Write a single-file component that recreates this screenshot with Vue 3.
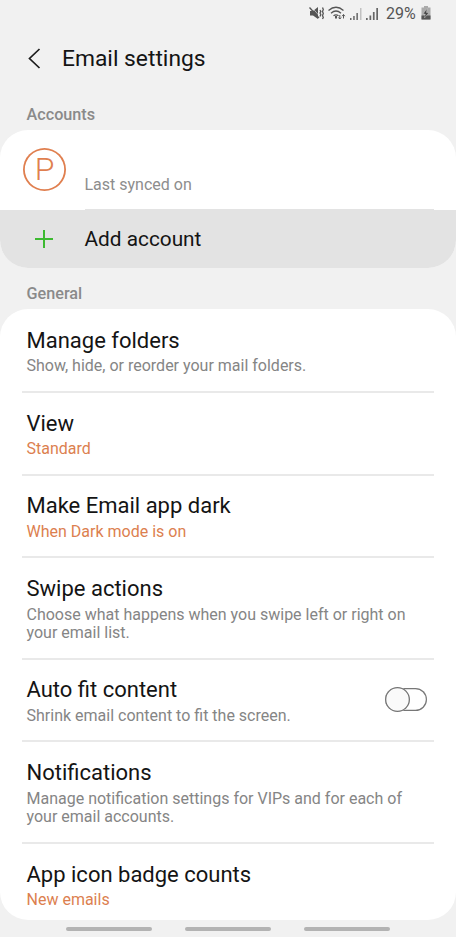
<script setup>
import { ref } from 'vue'

const autoFit = ref(false)
const settings = [
  { title: 'Manage folders', lines: ['Show, hide, or reorder your mail folders.'] },
  { title: 'View', lines: ['Standard'], accent: true },
  { title: 'Make Email app dark', lines: ['When Dark mode is on'], accent: true },
  { title: 'Swipe actions', lines: ['Choose what happens when you swipe left or right on', 'your email list.'] },
  { title: 'Auto fit content', lines: ['Shrink email content to fit the screen.'], toggle: true },
  { title: 'Notifications', lines: ['Manage notification settings for VIPs and for each of', 'your email accounts.'] },
  { title: 'App icon badge counts', lines: ['New emails'], accent: true },
]
</script>

<template>
  <main class="screen">
    <div class="status">
      <svg class="status-icons" width="74" height="16" viewBox="0 0 74 16">
        <path d="M1 5h3l5-4v12l-5-3.500H1z" fill="#555" />
        <path d="M.5 1.500l9.500 10.500" stroke="#555" stroke-width="1.300" />
        <path d="M2.500 1l8 9" stroke="#f1f1f1" stroke-width=".6" />
        <path d="M11 4l.8 1.500L11 7l.8 1.500L11 10.500M13.500 1.500l.8 2-.8 2 .8 2-.8 2 .8 2-.8 1.500" fill="none" stroke="#555" stroke-width="1.300" />
        <g fill="none" stroke="#555" stroke-width="1.300">
          <path d="M19.500 4.500q7.500-6.500 15 0M22 7.200q5-4.400 10 0M24.500 9.800q2.500-2 5 0" />
          <path d="M27 10v2.500" stroke-width="2" />
          <path d="M30.800 9v4m-1.400-1.500 1.400 1.500 1.400-1.500M34.500 12.500V8.500m-1.400 1.700 1.400-1.600L35.900 10.200" stroke-width="1" />
        </g>
        <g fill="#666">
          <path d="M41 12h1.500v2H41zM44.200 10h1.500v4h-1.500zM47.400 7h1.500v7h-1.500zM57 12h1.700v2H57zM60.500 9.500h1.700V14h-1.700zM63.900 6h1.700v8h-1.700zM67.300 2H69v12h-1.700z" />
          <path d="M51 2h1.500v12H51z" opacity=".35" />
        </g>
      </svg>
      <span class="percent">29%</span>
      <svg class="battery" width="10" height="14" viewBox="0 0 10 14">
        <path d="M3 0h4v1.500h2.500V13.500h-9V1.500H3z" fill="#aaa" />
        <path d="M.5 9.500h9v4h-9z" fill="#555" />
        <path d="M6 2.500 2 8h2.300L3.500 12 8 6.500H5.500z" fill="#444" stroke="#ddd" stroke-width=".4" />
      </svg>
    </div>

    <header class="header">
      <svg width="14" height="22" viewBox="0 0 14 22">
        <path d="M12.500 1 2.500 10.500l10 9.500" fill="none" stroke="#1c1c1c" stroke-width="1.700" />
      </svg>
      <h1>Email settings</h1>
    </header>

    <h2 class="section accounts-label">Accounts</h2>
    <section class="card">
      <div class="account">
        <div class="avatar">P</div>
        <div class="account-info">Last synced on</div>
      </div>
      <div class="add">
        <svg width="18" height="18" viewBox="0 0 18 18">
          <path d="M9 0v18M0 9h18" stroke="#3dba31" stroke-width="2" />
        </svg>
        <span class="add-label">Add account</span>
      </div>
    </section>

    <h2 class="section general-label">General</h2>
    <section class="card general">
      <div v-for="item in settings" :key="item.title" class="row">
        <div>
          <div class="title">{{ item.title }}</div>
          <div class="desc" :class="{ accent: item.accent }">
            <div v-for="line in item.lines" :key="line">{{ line }}</div>
          </div>
        </div>
        <button v-if="item.toggle" class="toggle" :class="{ on: autoFit }" @click="autoFit = !autoFit">
          <span class="knob"></span>
        </button>
      </div>
    </section>

    <nav class="nav"><span></span><span></span><span></span></nav>
  </main>
</template>

<style>
body { background: #f1f1f1; }
</style>

<style scoped>
* { box-sizing: border-box; }
.screen {
  width: 456px;
  height: 937px;
  overflow: hidden;
  background: #f1f1f1;
  font-family: Roboto, sans-serif;
  color: #141414;
}
.status {
  height: 28px;
  padding: 0 25px 1px 0;
  display: flex;
  align-items: center;
  justify-content: flex-end;
}
.percent { width: 31px; margin: 1px 4px 0 3px; font-size: 16px; line-height: 18px; color: #555; white-space: nowrap; }
.battery { margin-bottom: 1px; }
.header { height: 62px; padding-left: 27px; display: flex; align-items: center; gap: 21px; }
h1 { margin: 0; font-size: 22.800px; font-weight: 400; line-height: 28px; white-space: nowrap; }
.section { margin: 0; padding-left: 26.500px; font-size: 16.200px; font-weight: 500; line-height: 20px; color: #8a8a8a; }
.section.accounts-label { height: 40px; padding-top: 15px; }
.section.general-label { height: 41px; padding-top: 16px; }
.card { background: #fff; border-radius: 28px; overflow: hidden; }
.account { height: 80px; display: flex; padding-left: 23px; }
.avatar {
  width: 43px;
  height: 43px;
  margin-top: 18px;
  border-radius: 50%;
  box-shadow: inset 0 0 0 1.800px #e07f4f;
  color: #e07f4f;
  font-size: 32px;
  font-weight: 300;
  line-height: 42px;
  text-align: center;
}
.account-info {
  width: 349px;
  height: 80px;
  margin-left: 18.500px;
  padding-top: 45px;
  border-bottom: 1px solid #e3e3e3;
  font-size: 16px;
  line-height: 20px;
  color: #8d8d8d;
}
.add { height: 58px; padding-left: 35px; display: flex; align-items: center; gap: 31.500px; background: #e3e3e3; }
.add-label { font-size: 20.800px; line-height: 26px; white-space: nowrap; }
.title { font-size: 22px; line-height: 26px; white-space: nowrap; }
.general { height: 611px; padding: 1px 22px 0; }
.row {
  padding: 17.800px 0 15px 4.500px;
  display: flex;
  align-items: center;
  justify-content: space-between;
  border-bottom: 2px solid #e9e9e9;
}
.row:last-child { border-bottom: 0; }
.desc { margin-top: 3.500px; font-size: 16px; line-height: 18.500px; color: #858585; white-space: nowrap; }
.desc.accent { color: #dc7f4f; }
.toggle {
  width: 42px;
  height: 23px;
  padding: 0;
  margin: 0 7.500px 4px 0;
  display: flex;
  align-items: center;
  border: 0;
  border-radius: 12px;
  background: #fff;
  box-shadow: inset 0 0 0 1.200px #777;
}
.toggle.on { justify-content: flex-end; }
.knob { width: 25px; height: 25px; flex: none; border-radius: 50%; background: #fafafa; box-shadow: inset 0 0 0 1.300px #747474; }
.nav { height: 17px; display: flex; justify-content: center; gap: 33px; padding-top: 7px; }
.nav span { width: 86px; height: 4px; border-radius: 2px; background: #b3b3b3; }
</style>
